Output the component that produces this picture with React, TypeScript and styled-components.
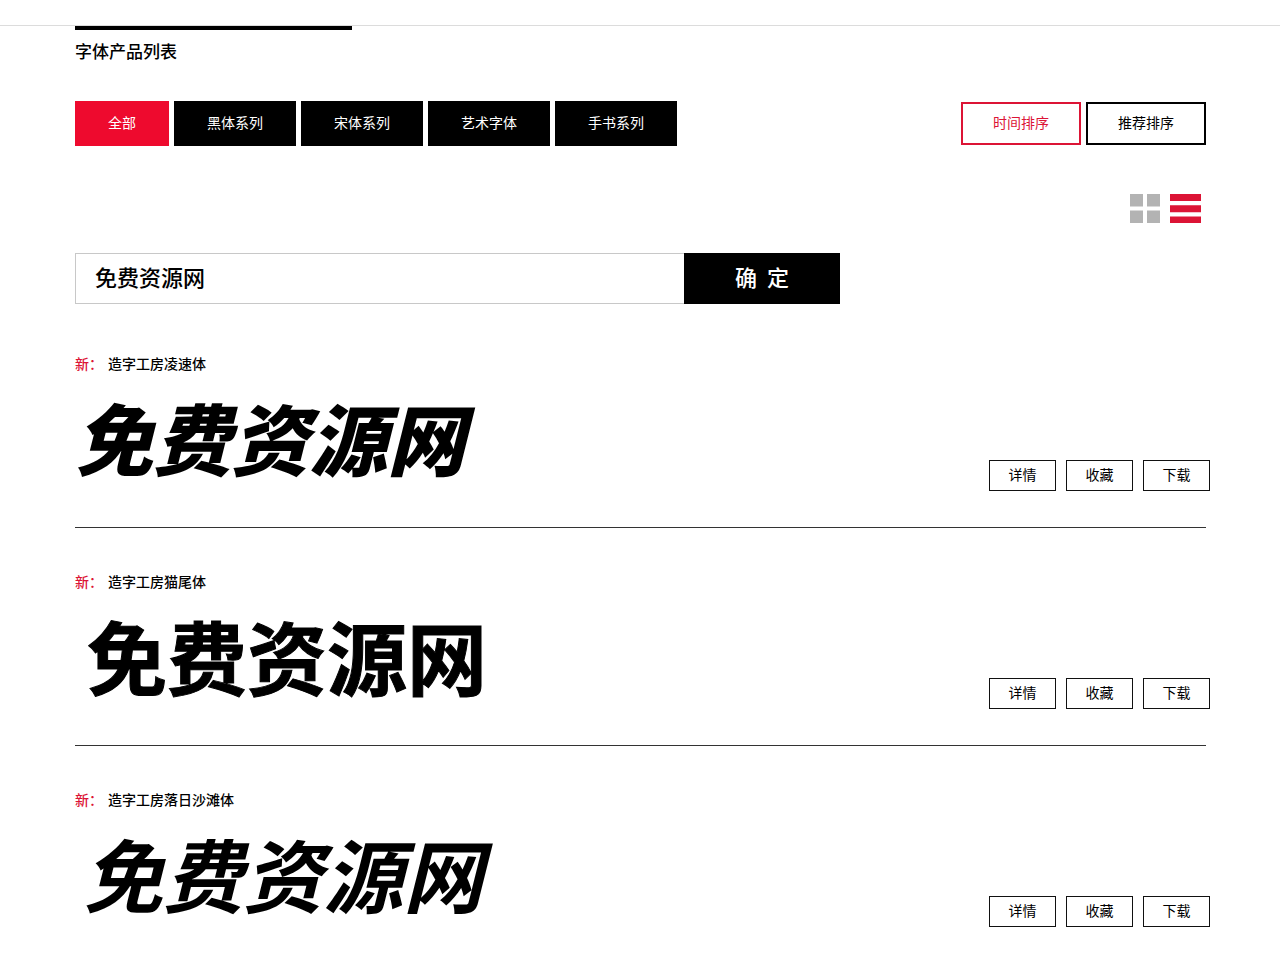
import React, { useState } from "react";
import styled, { createGlobalStyle, css } from "styled-components";

const RED = "#ee0a2e";
const DEEP_RED = "#dc1435";

const GlobalStyle = createGlobalStyle`
  *, *::before, *::after { box-sizing: border-box; }
  body {
    margin: 0;
    background: #fff;
    color: #000;
    font-family: "Noto Sans CJK SC", sans-serif;
    font-size: 14px;
    line-height: 20px;
  }
  button, input { font: inherit; color: inherit; margin: 0; cursor: pointer; }
`;

const TopRule = styled.header`
  height: 26px;
  border-bottom: 1px solid #dcdcdc;
`;

const Page = styled.main`
  padding: 0 74px 31px 75px;
`;

const Heading = styled.h1`
  margin: 0;
  font-size: 17px;
  line-height: 24px;
  font-weight: 500;

  &::before {
    content: "";
    display: block;
    width: 277px;
    max-width: 100%;
    height: 4px;
    margin-bottom: 9px;
    background: #000;
  }
`;

const Toolbar = styled.div`
  display: flex;
  justify-content: space-between;
  align-items: center;
  margin-top: 38px;
`;

const ButtonGroup = styled.div`
  display: flex;
  gap: 5px;
`;

const FilterButton = styled.button<{ $active: boolean }>`
  height: 45px;
  padding: 0 33px 3px;
  border: 0;
  color: #fff;
  background: ${(p) => (p.$active ? RED : "#000")};
`;

const SortButton = styled.button<{ $active: boolean }>`
  height: 43px;
  padding: 0 30px 3px;
  border: 2px solid currentColor;
  background: #fff;
  color: ${(p) => (p.$active ? DEEP_RED : "#000")};
`;

const ViewSwitch = styled.div`
  display: flex;
  justify-content: flex-end;
  gap: 10px;
  margin-top: 48px;
  padding-right: 5px;
`;

const ViewButton = styled.button<{ $active: boolean }>`
  display: block;
  height: 29px;
  padding: 0;
  border: 0;
  background: none;
  color: ${(p) => (p.$active ? DEEP_RED : "#b3b3b3")};

  svg { display: block; }
`;

const SearchForm = styled.form`
  display: flex;
  max-width: 765px;
  height: 51px;
  margin: 30px 0 6px;
`;

const SearchInput = styled.input`
  flex: 1;
  min-width: 0;
  padding: 0 19px 6px;
  border: 1px solid #c8c8c8;
  border-right: 0;
  border-radius: 0;
  outline: 0;
  background: #fff;
  font-size: 22px;
  font-weight: 500;
  cursor: text;
`;

const SearchButton = styled.button`
  width: 156px;
  padding: 0 0 6px;
  border: 0;
  background: #000;
  color: #fff;
  font-size: 22px;
  font-weight: 500;
  white-space: pre;
`;

const FontList = styled.ul`
  margin: 0;
  padding: 0;
  list-style: none;
`;

const FontItem = styled.li`
  display: flex;
  justify-content: space-between;
  align-items: flex-end;
  padding: 43px 0 36px;
  border-bottom: 1px solid #333;

  &:last-child {
    padding-bottom: 0;
    border-bottom: 0;
  }
`;

const FontName = styled.h2`
  display: flex;
  gap: 5px;
  margin: 0 0 18px;
  font-size: 14px;
  line-height: 20px;
  font-weight: 500;
`;

const NewTag = styled.span`
  color: ${DEEP_RED};
`;

type Face = "speed" | "cat" | "beach";

const faces = {
  speed: css`
    font-size: 78px;
    font-weight: 900;
    font-style: italic;
  `,
  cat: css`
    padding-left: 12px;
    font-size: 80px;
    font-weight: 700;
    -webkit-text-stroke: 1px #000;
  `,
  beach: css`
    padding-left: 8px;
    font-size: 80px;
    font-weight: 700;
    font-style: italic;
  `,
};

const Sample = styled.p<{ $face: Face }>`
  margin: 0 0 10px;
  line-height: 90px;
  white-space: nowrap;
  ${(p) => faces[p.$face]}
`;

const Actions = styled.div`
  display: flex;
  gap: 10px;
  margin-right: -4px;
`;

const ActionButton = styled.button`
  width: 67px;
  height: 31px;
  padding: 0 0 3px;
  border: 1px solid #111;
  background: #fff;
`;

const filters = ["全部", "黑体系列", "宋体系列", "艺术字体", "手书系列"];
const sorts = ["时间排序", "推荐排序"];
const actions = ["详情", "收藏", "下载"];
const fonts: { name: string; face: Face }[] = [
  { name: "造字工房凌速体", face: "speed" },
  { name: "造字工房猫尾体", face: "cat" },
  { name: "造字工房落日沙滩体", face: "beach" },
];

const GridIcon = () => (
  <svg width="30" height="29" fill="currentColor" aria-hidden="true">
    <path d="M0 0h13v12.500H0zM17 0h13v12.500H17zM0 16.500h13V29H0zM17 16.500h13V29H17z" />
  </svg>
);

const ListIcon = () => (
  <svg width="31" height="29" fill="currentColor" aria-hidden="true">
    <path d="M0 0h31v7H0zM0 11.200h31v7H0zM0 22.500h31v7H0z" />
  </svg>
);

export default function App() {
  const [filter, setFilter] = useState(filters[0]);
  const [sort, setSort] = useState(sorts[0]);
  const [view, setView] = useState("list");
  const [text, setText] = useState("免费资源网");

  return (
    <>
      <GlobalStyle />
      <TopRule />
      <Page>
        <Heading>字体产品列表</Heading>
        <Toolbar>
          <ButtonGroup>
            {filters.map((f) => (
              <FilterButton key={f} type="button" $active={f === filter} onClick={() => setFilter(f)}>
                {f}
              </FilterButton>
            ))}
          </ButtonGroup>
          <ButtonGroup>
            {sorts.map((s) => (
              <SortButton key={s} type="button" $active={s === sort} onClick={() => setSort(s)}>
                {s}
              </SortButton>
            ))}
          </ButtonGroup>
        </Toolbar>
        <ViewSwitch>
          <ViewButton type="button" aria-label="网格" $active={view === "grid"} onClick={() => setView("grid")}>
            <GridIcon />
          </ViewButton>
          <ViewButton type="button" aria-label="列表" $active={view === "list"} onClick={() => setView("list")}>
            <ListIcon />
          </ViewButton>
        </ViewSwitch>
        <SearchForm onSubmit={(e) => e.preventDefault()}>
          <SearchInput aria-label="预览文字" value={text} onChange={(e) => setText(e.target.value)} />
          <SearchButton type="submit">{"确  定"}</SearchButton>
        </SearchForm>
        <FontList>
          {fonts.map((font) => (
            <FontItem key={font.name}>
              <div>
                <FontName>
                  <NewTag>新：</NewTag>
                  {font.name}
                </FontName>
                <Sample $face={font.face}>{text}</Sample>
              </div>
              <Actions>
                {actions.map((a) => (
                  <ActionButton key={a} type="button">{a}</ActionButton>
                ))}
              </Actions>
            </FontItem>
          ))}
        </FontList>
      </Page>
    </>
  );
}
